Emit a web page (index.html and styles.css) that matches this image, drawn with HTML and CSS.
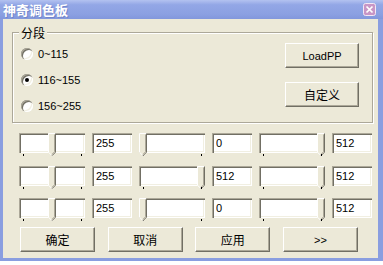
FILE: index.html
```html
<html>
  <head>
    <link rel="stylesheet" href="styles.css">
  </head>
  <body>
    <svg class="defs">
      <symbol id="thumb" viewBox="0 0 8 23">
        <polygon points="0,0 8,0 8,19 4,23 0,19" fill="#ece9d8"/>
        <polyline points="0.5,19.2 0.5,0.5 7.5,0.5" fill="none" stroke="#fff"/>
        <line x1="0.5" y1="19.2" x2="4" y2="22.7" stroke="#fff"/>
        <polyline points="7.5,0.5 7.5,19.2 4,22.7" fill="none" stroke="#716f64"/>
        <polyline points="6.5,1.5 6.5,18.8 4,21.3" fill="none" stroke="#aca899"/>
      </symbol>
    </svg>

    <div class="window">
      <div class="titlebar">
        <span class="title">神奇调色板</span>
        <svg class="close" viewBox="0 0 13 13">
          <rect x="0.5" y="0.5" width="12" height="12" rx="2" fill="#c896c6" stroke="#f4e8f4"/>
          <path d="M3.5 3.5 L9.5 9.5 M9.5 3.5 L3.5 9.5" stroke="#fff" stroke-width="1.7"/>
        </svg>
      </div>

      <div class="client">
        <div class="group">
          <div class="group-title">分段</div>
          <div class="group-body">
            <div class="radios">
              <label class="radio-row"><span class="radio"></span>0~115</label>
              <label class="radio-row"><span class="radio checked"></span>116~155</label>
              <label class="radio-row"><span class="radio"></span>156~255</label>
            </div>
            <div class="side-buttons">
              <button class="btn">LoadPP</button>
              <button class="btn zh">自定义</button>
            </div>
          </div>
        </div>

        <div class="rows">
          <div class="row">
            <div class="slider"><svg class="thumb" style="left:29px"><use href="#thumb"/></svg></div>
            <input class="field" type="text" value="255">
            <div class="slider"><svg class="thumb" style="left:0px"><use href="#thumb"/></svg></div>
            <input class="field" type="text" value="0">
            <div class="slider"><svg class="thumb" style="left:58px"><use href="#thumb"/></svg></div>
            <input class="field" type="text" value="512">
          </div>
          <div class="row">
            <div class="slider"><svg class="thumb" style="left:29px"><use href="#thumb"/></svg></div>
            <input class="field" type="text" value="255">
            <div class="slider"><svg class="thumb" style="left:58px"><use href="#thumb"/></svg></div>
            <input class="field" type="text" value="512">
            <div class="slider"><svg class="thumb" style="left:58px"><use href="#thumb"/></svg></div>
            <input class="field" type="text" value="512">
          </div>
          <div class="row">
            <div class="slider"><svg class="thumb" style="left:29px"><use href="#thumb"/></svg></div>
            <input class="field" type="text" value="255">
            <div class="slider"><svg class="thumb" style="left:0px"><use href="#thumb"/></svg></div>
            <input class="field" type="text" value="0">
            <div class="slider"><svg class="thumb" style="left:58px"><use href="#thumb"/></svg></div>
            <input class="field" type="text" value="512">
          </div>
        </div>

        <div class="buttons">
          <button class="btn wide zh">确定</button>
          <button class="btn wide zh">取消</button>
          <button class="btn wide zh">应用</button>
          <button class="btn wide">&gt;&gt;</button>
        </div>
      </div>
    </div>
  </body>
</html>
```

FILE: styles.css
```css
* { box-sizing: border-box; }
body { margin: 0; background: #fff; color: #000; font: 11px "Liberation Sans", "Noto Sans CJK SC", sans-serif; }
.defs { display: block; width: 0; height: 0; }

.window { width: 383px; height: 261px; display: flex; flex-direction: column; }
.titlebar { height: 19px; flex: none; display: flex; align-items: center; justify-content: space-between; padding: 0 7px 0 3px; background: linear-gradient(#b3c2f0, #93a7e6 25%, #8ba0e2 75%, #8297dc); }
.title { color: #fff; font: bold 13px "Noto Sans CJK SC", sans-serif; text-shadow: 1px 1px 0 #7386c9; }
.close { width: 13px; height: 13px; }

.client { flex: 1; background: #ece9d8; border: solid #8a9ee0; border-width: 0 5px 3px 3px; }
.zh { font-size: 12px; font-family: "Noto Sans CJK SC", sans-serif; }

.group { margin: 13px 5px 0 9px; border: 1px solid #aca899; box-shadow: 1px 1px 0 #fff, inset 1px 1px 0 #fff; }
.group-title { width: fit-content; margin: -6px 0 0 6px; padding: 0 2px; background: #ece9d8; font: 12px/12px "Noto Sans CJK SC", sans-serif; }
.group-body { display: flex; justify-content: space-between; padding: 4px 13px 6px 8px; }
.radios { display: flex; flex-direction: column; gap: 5px; }
.radio-row { display: flex; align-items: center; gap: 5px; height: 21px; }
.radio { width: 12px; height: 12px; border-radius: 50%; background: #fff; display: flex; align-items: center; justify-content: center;
  box-shadow: inset 1px 1px #aca899, inset 2px 2px #716f64, inset -1px -1px #fff, inset -2px -2px #f1efe2; }
.radio.checked::after { content: ""; width: 4px; height: 4px; border-radius: 50%; background: #000; }
.side-buttons { display: flex; flex-direction: column; gap: 14px; }

.btn { width: 74px; height: 25px; padding: 0; background: #ece9d8; color: #000; font: inherit; border: 1px solid; border-color: #fff #716f64 #716f64 #fff; box-shadow: inset -1px -1px #aca899; }
.btn.zh { font-size: 12px; font-family: "Noto Sans CJK SC", sans-serif; }
.btn.wide { width: 75px; }

.rows { display: flex; flex-direction: column; gap: 12.5px; margin: 10px 0 0 16px; }
.row { display: flex; gap: 7px; }
.sunken { }
.slider, .field { height: 20px; background: #fff; box-shadow: inset 1px 1px #aca899, inset 2px 2px #716f64, inset -1px -1px #fff, inset -2px -2px #f1efe2; }
.slider { position: relative; width: 66px; }
.slider::before, .slider::after { content: ""; position: absolute; top: 21px; width: 1px; height: 2px; background: #000; }
.slider::before { left: 4px; }
.slider::after { right: 3px; }
.thumb { position: absolute; top: 0; width: 8px; height: 23px; }
.field { width: 40px; border: 0; padding: 0 0 0 4px; font: inherit; color: #000; outline: none; }

.buttons { display: flex; justify-content: space-between; margin: 9px 20px 0 17px; }
```
